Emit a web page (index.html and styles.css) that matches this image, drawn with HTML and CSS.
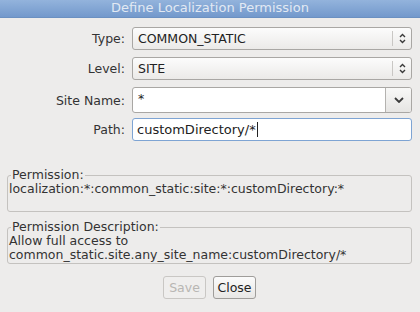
FILE: index.html
```html
<!DOCTYPE html>
<html lang="en">
<head>
    <meta charset="UTF-8">
    <title>Define Localization Permission</title>
    <link rel="stylesheet" href="styles.css">
</head>
<body>

<div class="window">
    <div class="titlebar">Define Localization Permission</div>

    <div class="dialog">
        <div class="form">
            <div class="form-row">
                <label class="form-label">Type:</label>
                <div class="combo">
                    <span class="combo-text">COMMON_STATIC</span>
                    <span class="combo-arrow">
                        <svg width="7" height="11" viewBox="0 0 7 11"><path d="M1 4 L3.5 1.5 L6 4 M1 7 L3.5 9.5 L6 7" fill="none" stroke="#3a3a3a" stroke-width="1.4"/></svg>
                    </span>
                </div>
            </div>

            <div class="form-row">
                <label class="form-label">Level:</label>
                <div class="combo">
                    <span class="combo-text">SITE</span>
                    <span class="combo-arrow">
                        <svg width="7" height="11" viewBox="0 0 7 11"><path d="M1 4 L3.5 1.5 L6 4 M1 7 L3.5 9.5 L6 7" fill="none" stroke="#3a3a3a" stroke-width="1.4"/></svg>
                    </span>
                </div>
            </div>

            <div class="form-row tight">
                <label class="form-label">Site Name:</label>
                <div class="combo-entry">
                    <span class="entry-text">*</span>
                    <span class="entry-button">
                        <svg width="10" height="6" viewBox="0 0 10 6"><path d="M1 1 L5 5 L9 1" fill="none" stroke="#3a3a3a" stroke-width="1.8"/></svg>
                    </span>
                </div>
            </div>

            <div class="form-row">
                <label class="form-label">Path:</label>
                <div class="entry focused">
                    <span class="entry-text">customDirectory/*</span><span class="cursor"></span>
                </div>
            </div>
        </div>

        <fieldset class="group group-permission">
            <legend>Permission:</legend>
            <div class="group-text">localization:*:common_static:site:*:customDirectory:*</div>
        </fieldset>

        <fieldset class="group group-description">
            <legend>Permission Description:</legend>
            <div class="group-text">Allow full access to<br>common_static.site.any_site_name:customDirectory/*</div>
        </fieldset>

        <div class="buttons">
            <button class="btn" disabled>Save</button>
            <button class="btn">Close</button>
        </div>
    </div>
</div>

</body>
</html>
```

FILE: styles.css
```css
body {
    margin: 0;
    padding: 0;
    font-family: "DejaVu Sans", sans-serif;
    font-size: 12.5px;
    color: #2e3436;
    background-color: #edeceb;
}

.window {
    width: 420px;
    height: 312px;
    background-color: #edeceb;
}

.titlebar {
    height: 18px;
    line-height: 16px;
    text-align: center;
    color: #e2e9f3;
    font-size: 13px;
    background: linear-gradient(#93b3dc, #7399cc);
    border-bottom: 1px solid #6b90c1;
    box-sizing: border-box;
}

.dialog {
    padding: 9px 8px 0 7px;
}

/* label + field rows */
.form-row {
    display: flex;
    align-items: center;
    gap: 7px;
    margin-bottom: 7px;
}

.form-row.tight {
    margin-bottom: 5px;
}

.form-row:last-child {
    margin-bottom: 0;
}

.form-label {
    width: 118px;
    text-align: right;
    font-size: 12.5px;
    color: #333;
}

.combo {
    width: 280px;
    height: 23px;
    box-sizing: border-box;
    border: 1px solid #a9a7a4;
    border-radius: 3px;
    background: linear-gradient(#fcfcfc, #ebeae8);
    display: flex;
    align-items: center;
}

.combo-text {
    flex: 1;
    padding-left: 5px;
    font-size: 12.5px;
    color: #222;
}

.combo-arrow {
    width: 18px;
    height: 15px;
    border-left: 1px solid #c9c7c4;
    display: flex;
    align-items: center;
    justify-content: center;
}

.combo-entry {
    width: 280px;
    height: 26px;
    box-sizing: border-box;
    border: 1px solid #a9a7a4;
    border-radius: 3px;
    background-color: #fff;
    display: flex;
    overflow: hidden;
}

.combo-entry .entry-text {
    flex: 1;
    padding-left: 5px;
    line-height: 22px;
    font-size: 12.5px;
    color: #222;
}

.entry-button {
    width: 25px;
    border-left: 1px solid #b4b2af;
    background: linear-gradient(#f8f8f7, #e6e5e3);
    display: flex;
    align-items: center;
    justify-content: center;
}

.entry {
    width: 280px;
    height: 23px;
    box-sizing: border-box;
    border: 1px solid #a9a7a4;
    border-radius: 3px;
    background-color: #fff;
    display: flex;
    align-items: center;
    padding-left: 4px;
}

.entry.focused {
    border-color: #7ea4d3;
}

.entry .entry-text {
    font-size: 13px;
    color: #222;
}

.cursor {
    width: 1px;
    height: 15px;
    background-color: #222;
    margin-left: 1px;
}

/* group boxes */
.group {
    margin: 0;
    padding: 0 1px;
    border: 1px solid #c4c2bf;
    border-radius: 3px;
}

.group legend {
    padding: 0 1px;
    margin-left: 2px;
    font-size: 12.5px;
    line-height: 14px;
    color: #333;
}

.group-text {
    font-size: 12.5px;
    line-height: 14px;
    color: #333;
}

.group-permission {
    margin-top: 27px;
    height: 44px;
    box-sizing: border-box;
}

.group-description {
    margin-top: 8px;
    height: 44px;
    box-sizing: border-box;
}

.buttons {
    display: flex;
    justify-content: center;
    gap: 7px;
    margin-top: 12px;
}

.btn {
    width: 43px;
    height: 23px;
    padding: 0;
    font-family: "DejaVu Sans", sans-serif;
    font-size: 12.5px;
    color: #222;
    border: 1px solid #9f9d9a;
    border-radius: 3px;
    background: linear-gradient(#fbfbfb, #e8e7e5);
}

.btn:disabled {
    color: #b8b6b3;
    border-color: #c9c7c4;
    background: #efeeed;
}
```
